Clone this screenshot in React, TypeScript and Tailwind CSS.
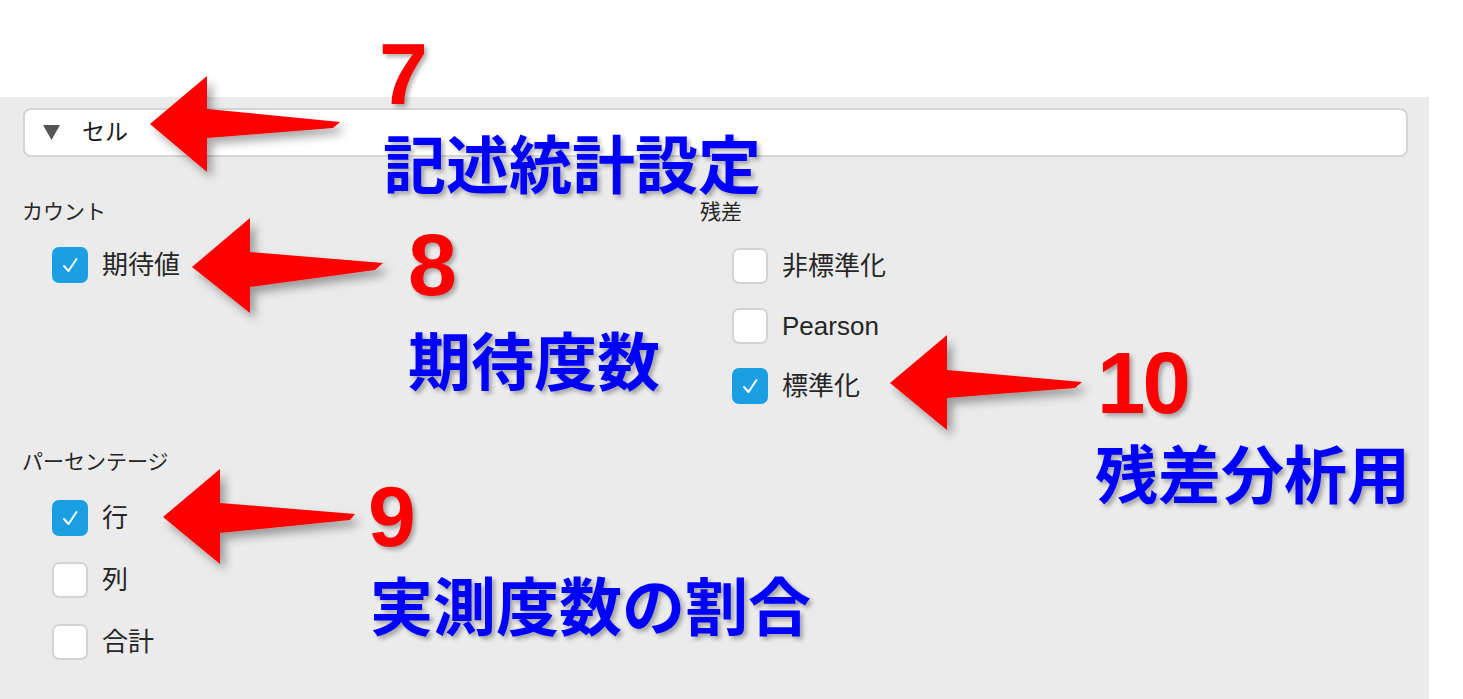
import React from 'react';

const uiFont = { fontFamily: '"Liberation Sans", "Noto Sans CJK JP", sans-serif' };
const noteFont = { fontFamily: '"Noto Sans CJK JP", sans-serif' };
const numFont = { fontFamily: '"Liberation Sans", Arial, sans-serif' };

function Check({ checked, label }: { checked?: boolean; label: string }) {
  return (
    <div className="flex items-center gap-[14px] h-[36px]">
      {checked ? (
        <div className="w-[36px] h-[36px] rounded-[7px] bg-[#1a9fe3] flex items-center justify-center">
          <svg width="36" height="36" viewBox="0 0 36 36">
            <path d="M12 19 L16.5 24 L24.5 12" fill="none" stroke="#fff" strokeWidth="2" strokeLinecap="round" strokeLinejoin="round" />
          </svg>
        </div>
      ) : (
        <div className="w-[36px] h-[36px] rounded-[7px] bg-white border-[2px] border-[#d3d3d3]" />
      )}
      <span className="text-[26px] leading-none text-[#262626]">{label}</span>
    </div>
  );
}

// red arrows pointing left, drawn over the panel
const arrows = [
  '150,124 207,76 207,109 340,122 333,128 207,138 207,172',
  '192,267 250,218 250,252 383,263 375,270 250,287 250,313',
  '163,517 220,469 220,503 355,514 350,520 220,533 220,564',
  '890,383 947,335 947,370 1082,382 1075,388 947,398 947,430',
];

export default function App() {
  return (
    <div className="relative w-[1463px] h-[699px] bg-white overflow-hidden">
      <div className="h-[97px]" />
      <div className="w-[1429px] h-[602px] bg-[#ebebeb] pt-[11px] pl-[22px]" style={uiFont}>
        {/* Cell section header */}
        <div className="ml-[1px] w-[1385px] h-[49px] bg-white border-[2px] border-[#d5d5d5] rounded-[8px] flex items-center pl-[18px] gap-[22px]">
          <svg width="17" height="15" viewBox="0 0 17 15">
            <polygon points="0,0 17,0 8.5,15" fill="#555" />
          </svg>
          <span className="text-[23px] leading-none text-[#1a1a1a]">セル</span>
        </div>

        <div className="flex mt-[43px]">
          {/* Counts / percentages */}
          <div className="w-[678px]">
            <div className="text-[21px] leading-[24px] text-[#262626]">カウント</div>
            <div className="ml-[30px] mt-[23px]">
              <Check checked label="期待値" />
            </div>
            <div className="text-[21px] leading-[24px] text-[#262626] mt-[167px]">パーセンテージ</div>
            <div className="ml-[30px] mt-[26px] flex flex-col gap-[26px]">
              <Check checked label="行" />
              <Check label="列" />
              <Check label="合計" />
            </div>
          </div>

          {/* Residuals */}
          <div>
            <div className="text-[21px] leading-[24px] text-[#262626]">残差</div>
            <div className="ml-[32px] mt-[24px] flex flex-col gap-[24px]">
              <Check label="非標準化" />
              <Check label="Pearson" />
              <Check checked label="標準化" />
            </div>
          </div>
        </div>
      </div>

      {/* annotations */}
      <svg className="absolute left-0 top-0 pointer-events-none" width="1463" height="699">
        <defs>
          <filter id="sh" x="-20%" y="-20%" width="140%" height="150%">
            <feDropShadow dx="5" dy="6" stdDeviation="5" floodColor="#000" floodOpacity="0.35" />
          </filter>
        </defs>
        {arrows.map((p) => (
          <polygon key={p} points={p} fill="#ff0000" filter="url(#sh)" />
        ))}
      </svg>

      <div className="absolute left-[379px] top-[30px] text-[88px] leading-none font-bold text-[#ff0000] [text-shadow:3px_3px_4px_rgba(0,0,0,0.3)]" style={numFont}>7</div>
      <div className="absolute left-[408px] top-[221px] text-[88px] leading-none font-bold text-[#ff0000] [text-shadow:3px_3px_4px_rgba(0,0,0,0.3)]" style={numFont}>8</div>
      <div className="absolute left-[368px] top-[473px] text-[86px] leading-none font-bold text-[#ff0000] [text-shadow:3px_3px_4px_rgba(0,0,0,0.3)]" style={numFont}>9</div>
      <div className="absolute left-[1097px] top-[339px] text-[87px] leading-none font-bold text-[#ff0000] tracking-[-3px] [text-shadow:3px_3px_4px_rgba(0,0,0,0.3)]" style={numFont}>10</div>

      <div className="absolute left-[383px] top-[133px] text-[63px] leading-[56px] font-bold text-[#0000ff] [text-shadow:3px_3px_4px_rgba(0,0,0,0.3)]" style={noteFont}>記述統計設定</div>
      <div className="absolute left-[408px] top-[330px] text-[63px] leading-[56px] font-bold text-[#0000ff] [text-shadow:3px_3px_4px_rgba(0,0,0,0.3)]" style={noteFont}>期待度数</div>
      <div className="absolute left-[1095px] top-[443px] text-[63px] leading-[56px] font-bold text-[#0000ff] [text-shadow:3px_3px_4px_rgba(0,0,0,0.3)]" style={noteFont}>残差分析用</div>
      <div className="absolute left-[370px] top-[575px] text-[63px] leading-[56px] font-bold text-[#0000ff] [text-shadow:3px_3px_4px_rgba(0,0,0,0.3)]" style={noteFont}>実測度数の割合</div>
    </div>
  );
}
